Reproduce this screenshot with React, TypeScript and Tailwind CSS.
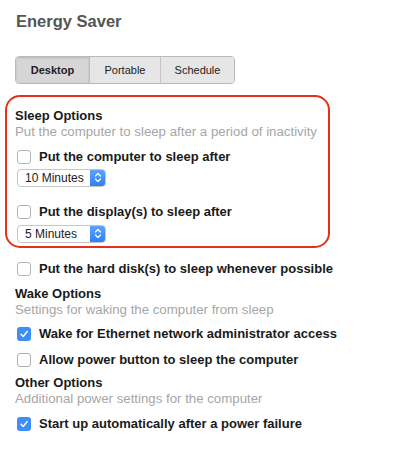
import React from "react";

const font = { fontFamily: '"Liberation Sans", Arial, sans-serif' };

function Checkbox({ checked }: { checked?: boolean }) {
  if (checked) {
    return (
      <span className="flex h-[14px] w-[14px] shrink-0 items-center justify-center rounded-[3px] bg-[#3d8ef7]">
        <svg width="10" height="10" viewBox="0 0 10 10">
          <path d="M2 5.2 L4.2 7.5 L8.2 2.5" fill="none" stroke="white" strokeWidth="1.4" strokeLinecap="round" strokeLinejoin="round" />
        </svg>
      </span>
    );
  }
  return <span className="block h-[14px] w-[14px] shrink-0 rounded-[3px] border border-[#b3b3b3] bg-white" />;
}

function CheckRow({ label, checked }: { label: string; checked?: boolean }) {
  return (
    <div className="flex h-[16px] items-center gap-[8px] pl-[2px]">
      <Checkbox checked={checked} />
      <span className="text-[13px] font-bold leading-[16px] text-[#1a1a1a]">{label}</span>
    </div>
  );
}

function Select({ value }: { value: string }) {
  return (
    <div className="ml-[2px] flex h-[18px] w-[89px] items-stretch overflow-hidden rounded-[4px] border border-[#c6c6c6] bg-white">
      <span className="flex flex-1 items-center pl-[7px] text-[12px] leading-none text-[#222]">{value}</span>
      <span className="flex w-[15px] items-center justify-center bg-gradient-to-b from-[#5aa3fb] to-[#2f7ff2]">
        <svg width="8" height="11" viewBox="0 0 8 11">
          <path d="M1.5 4 L4 1.5 L6.5 4 M1.5 7 L4 9.5 L6.5 7" fill="none" stroke="white" strokeWidth="1.2" strokeLinecap="round" strokeLinejoin="round" />
        </svg>
      </span>
    </div>
  );
}

function Heading({ title, sub }: { title: string; sub: string }) {
  return (
    <div>
      <div className="text-[13px] font-bold leading-[16px] text-[#1a1a1a]">{title}</div>
      <div className="text-[13.25px] leading-[16px] text-[#a6a6a6]">{sub}</div>
    </div>
  );
}

export default function App() {
  return (
    <div style={font} className="h-[463px] w-[403px] bg-white pl-[15px] pt-[10px]">
      <div className="pl-[1px] text-[16.5px] font-bold leading-[22px] text-[#555555]">Energy Saver</div>

      <div className="mt-[24px] flex h-[28px] w-[220px] overflow-hidden rounded-[4px] border border-[#b9b9b9] text-[11px] text-[#222]">
        <div className="flex w-[74px] items-center justify-center border-r border-[#bdbdbd] bg-[#d6d6d6] font-bold shadow-[inset_0_1px_2px_rgba(0,0,0,0.15)]">Desktop</div>
        <div className="flex w-[71px] items-center justify-center border-r border-[#c4c4c4] bg-[#e6e6e6]">Portable</div>
        <div className="flex flex-1 items-center justify-center bg-[#e6e6e6]">Schedule</div>
      </div>

      <div className="-ml-[10px] mt-[11px] w-[325px] rounded-[15px] border-[2.5px] border-[#e2321d] pb-[3px] pl-[8px] pt-[10.5px]">
        <Heading title="Sleep Options" sub="Put the computer to sleep after a period of inactivity" />
        <div className="mt-[9px]">
          <CheckRow label="Put the computer to sleep after" />
        </div>
        <div className="mt-[4px]">
          <Select value="10 Minutes" />
        </div>
        <div className="mt-[17px]">
          <CheckRow label="Put the display(s) to sleep after" />
        </div>
        <div className="mt-[5px]">
          <Select value="5 Minutes" />
        </div>
      </div>

      <div className="mt-[13px]">
        <CheckRow label="Put the hard disk(s) to sleep whenever possible" />
      </div>
      <div className="mt-[9px]">
        <Heading title="Wake Options" sub="Settings for waking the computer from sleep" />
      </div>
      <div className="mt-[8px]">
        <CheckRow label="Wake for Ethernet network administrator access" checked />
      </div>
      <div className="mt-[10px]">
        <CheckRow label="Allow power button to sleep the computer" />
      </div>
      <div className="mt-[7px]">
        <Heading title="Other Options" sub="Additional power settings for the computer" />
      </div>
      <div className="mt-[9px]">
        <CheckRow label="Start up automatically after a power failure" checked />
      </div>
    </div>
  );
}
